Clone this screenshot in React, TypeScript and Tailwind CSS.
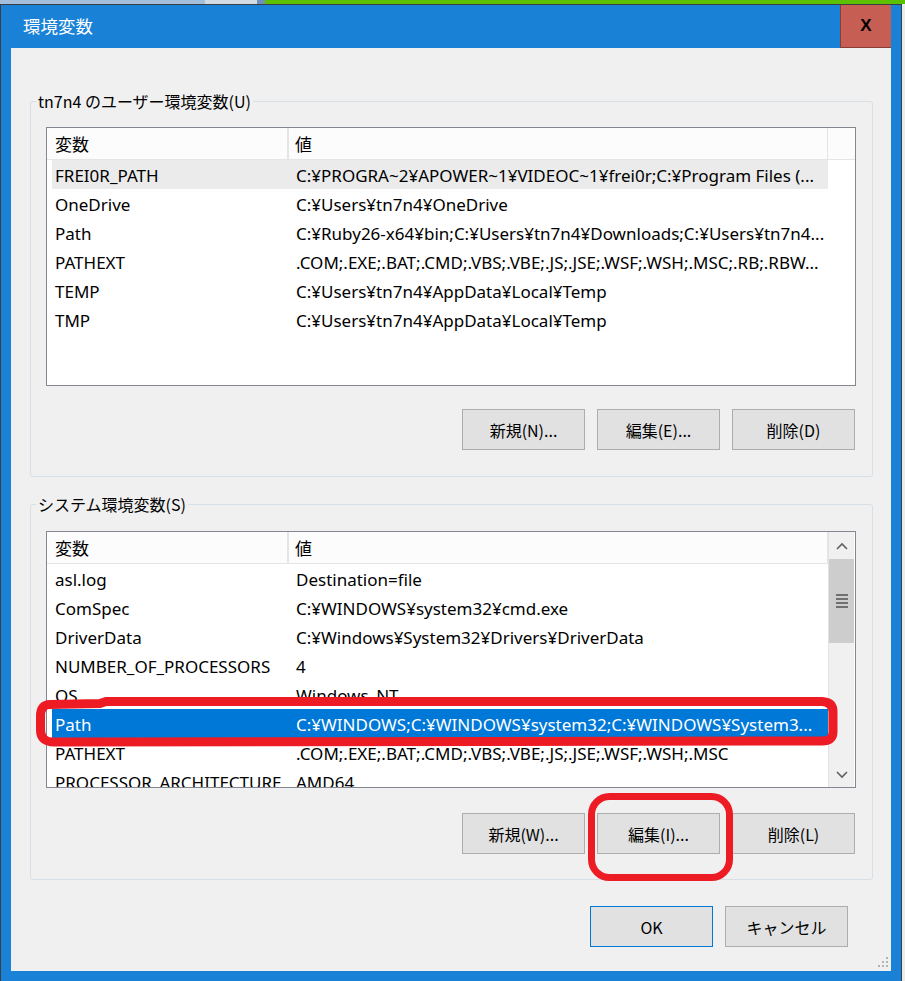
import React from "react";

type Row = [string, string];

const userVars: Row[] = [
  ["FREI0R_PATH", "C:¥PROGRA~2¥APOWER~1¥VIDEOC~1¥frei0r;C:¥Program Files (..."],
  ["OneDrive", "C:¥Users¥tn7n4¥OneDrive"],
  ["Path", "C:¥Ruby26-x64¥bin;C:¥Users¥tn7n4¥Downloads;C:¥Users¥tn7n4..."],
  ["PATHEXT", ".COM;.EXE;.BAT;.CMD;.VBS;.VBE;.JS;.JSE;.WSF;.WSH;.MSC;.RB;.RBW..."],
  ["TEMP", "C:¥Users¥tn7n4¥AppData¥Local¥Temp"],
  ["TMP", "C:¥Users¥tn7n4¥AppData¥Local¥Temp"],
];

const sysVars: Row[] = [
  ["asl.log", "Destination=file"],
  ["ComSpec", "C:¥WINDOWS¥system32¥cmd.exe"],
  ["DriverData", "C:¥Windows¥System32¥Drivers¥DriverData"],
  ["NUMBER_OF_PROCESSORS", "4"],
  ["OS", "Windows_NT"],
  ["Path", "C:¥WINDOWS;C:¥WINDOWS¥system32;C:¥WINDOWS¥System3..."],
  ["PATHEXT", ".COM;.EXE;.BAT;.CMD;.VBS;.VBE;.JS;.JSE;.WSF;.WSH;.MSC"],
  ["PROCESSOR_ARCHITECTURE", "AMD64"],
];

function ListRow({ row, state }: { row: Row; state: "none" | "hover" | "selected" }) {
  const cls =
    state === "selected"
      ? "flex h-[29px] w-[776px] shrink-0 bg-[#0078d7] text-white"
      : state === "hover"
      ? "flex h-[29px] w-[776px] shrink-0 bg-[#ebebeb] text-black"
      : "flex h-[29px] w-[776px] shrink-0 text-black";
  return (
    <div className={cls}>
      <div className="w-[244px] shrink-0 pl-[3px] pt-[2px] leading-[27px] whitespace-nowrap overflow-hidden">
        {row[0]}
      </div>
      <div className="flex-1 min-w-0 pt-[2px] leading-[27px] whitespace-nowrap overflow-hidden">{row[1]}</div>
    </div>
  );
}

function Chevron({ up }: { up: boolean }) {
  return (
    <svg width="12" height="8" viewBox="0 0 12 8">
      <polyline
        points={up ? "1,7 6,2 11,7" : "1,1 6,6 11,1"}
        fill="none"
        stroke="#606060"
        strokeWidth="1.6"
      />
    </svg>
  );
}

function Scrollbar() {
  return (
    <div className="w-[26px] shrink-0 flex flex-col bg-[#f0f0f0] border-l border-[#e3e3e3]">
      <div className="h-[27px] shrink-0 flex items-center justify-center bg-[#f0f0f0]">
        <Chevron up={true} />
      </div>
      <div className="h-[84px] shrink-0 bg-[#cdcdcd] flex flex-col items-center justify-center gap-[2px]">
        <div className="w-[12px] h-[2px] bg-[#707070]" />
        <div className="w-[12px] h-[2px] bg-[#707070]" />
        <div className="w-[12px] h-[2px] bg-[#707070]" />
        <div className="w-[12px] h-[2px] bg-[#707070]" />
      </div>
      <div className="flex-1" />
      <div className="h-[25px] shrink-0 flex items-center justify-center">
        <Chevron up={false} />
      </div>
    </div>
  );
}

function ListView({
  rows,
  tall,
  hover,
  selected,
  scroll,
}: {
  rows: Row[];
  tall: boolean;
  hover: number;
  selected: number;
  scroll: boolean;
}) {
  return (
    <div
      className={
        tall
          ? "flex h-[259px] w-[810px] border border-[#828790] bg-white overflow-hidden text-[17px]"
          : "flex h-[257px] w-[810px] border border-[#828790] bg-white overflow-hidden text-[17px]"
      }
    >
      <div className="flex flex-col w-[781px] shrink-0">
        <div className="flex h-[32px] shrink-0 border-b border-[#e5e5e5] bg-[#fcfcfc]">
          <div className="w-[242px] shrink-0 pl-[8px] pt-[3px] flex items-center border-r-2 border-[#e5e5e5]">
            変数
          </div>
          <div className="flex-1 pl-[6px] pt-[3px] flex items-center border-r border-[#e5e5e5]">値</div>
        </div>
        <div className="flex flex-col pl-[5px]">
          {rows.map((r, i) => (
            <ListRow key={i} row={r} state={i === selected ? "selected" : i === hover ? "hover" : "none"} />
          ))}
        </div>
      </div>
      {scroll ? (
        <Scrollbar />
      ) : (
        <div className="flex-1 h-[32px] border-b border-[#e5e5e5] bg-[#fcfcfc]" />
      )}
    </div>
  );
}

function Btn({ label, primary }: { label: string; primary?: boolean }) {
  return (
    <div
      className={
        primary
          ? "w-[123px] h-[41px] shrink-0 border border-[#0078d7] bg-[#e1e1e1] flex items-center justify-center text-[16px] font-['Noto_Sans_CJK_JP',sans-serif]"
          : "w-[123px] h-[41px] shrink-0 border border-[#adadad] bg-[#e1e1e1] flex items-center justify-center text-[16px] font-['Noto_Sans_CJK_JP',sans-serif]"
      }
    >
      {label}
    </div>
  );
}

function Group({
  legend,
  first,
  children,
}: {
  legend: string;
  first: boolean;
  children: React.ReactNode;
}) {
  return (
    <fieldset
      className={
        first
          ? "border border-[#d5dfe5] rounded-[3px] p-0 m-0 min-w-0"
          : "border border-[#d5dfe5] rounded-[3px] p-0 m-0 mt-[17px] min-w-0"
      }
    >
      <legend className="ml-[5px] px-[2px] text-[16px] leading-[20px] font-['Noto_Sans_CJK_JP',sans-serif]">
        {legend}
      </legend>
      {children}
    </fieldset>
  );
}

export default function App() {
  return (
    <div className="relative w-[905px] h-[981px] overflow-hidden bg-[#f0f0f0] flex flex-col font-['Noto_Sans','Noto_Sans_CJK_JP',sans-serif] text-black">
      <div className="flex h-[4px] shrink-0">
        <div className="w-[205px] bg-[#a3bfdc]" />
        <div className="w-[52px] bg-[#d3dbe4]" />
        <div className="w-[8px] bg-[#6f93b8]" />
        <div className="flex-1 bg-[#5cbf00]" />
      </div>
      <div className="flex flex-1 min-h-0">
        <div className="w-[902px] shrink-0 flex flex-col border-l border-t border-r border-[#3a3f45] bg-[#1a82d6] px-[10px] pb-[10px]">
          <div className="h-[43px] shrink-0 flex items-center">
            <div className="ml-[12px] text-white text-[17.5px] font-['Noto_Sans_CJK_JP',sans-serif]">環境変数</div>
            <div className="ml-auto w-[51px] h-full bg-[#c65e53] border-l border-b border-[#8a3d36] flex items-center justify-center text-black text-[17px] font-bold font-['Liberation_Sans',sans-serif]">
              X
            </div>
          </div>
          <div className="flex-1 flex flex-col bg-[#f0f0f0] pt-[43px] pl-[19px] pr-[18px]">
            <Group legend="tn7n4 のユーザー環境変数(U)" first={true}>
              <div className="pl-[15px] pr-[16px] pt-[16px] pb-[26px] flex flex-col">
                <ListView rows={userVars} tall={true} hover={0} selected={-1} scroll={false} />
                <div className="flex justify-end gap-[12px] mt-[23px] mr-[1px]">
                  <Btn label="新規(N)..." />
                  <Btn label="編集(E)..." />
                  <Btn label="削除(D)" />
                </div>
              </div>
            </Group>
            <Group legend="システム環境変数(S)" first={false}>
              <div className="pl-[15px] pr-[16px] pt-[17px] pb-[25px] flex flex-col">
                <ListView rows={sysVars} tall={false} hover={-1} selected={5} scroll={true} />
                <div className="flex justify-end gap-[12px] mt-[25px] mr-[1px]">
                  <Btn label="新規(W)..." />
                  <Btn label="編集(I)..." />
                  <Btn label="削除(L)" />
                </div>
              </div>
            </Group>
            <div className="flex justify-end gap-[12px] mt-[26px] pr-[25px]">
              <Btn label="OK" primary={true} />
              <Btn label="キャンセル" />
            </div>
            <div className="flex-1 flex justify-end items-end pb-[2px] -mr-[16px]">
              <svg width="12" height="12" viewBox="0 0 12 12">
                <rect x="9" y="0" width="2" height="2" fill="#b4b4b4" />
                <rect x="5" y="4" width="2" height="2" fill="#b4b4b4" />
                <rect x="9" y="4" width="2" height="2" fill="#b4b4b4" />
                <rect x="1" y="8" width="2" height="2" fill="#b4b4b4" />
                <rect x="5" y="8" width="2" height="2" fill="#b4b4b4" />
                <rect x="9" y="8" width="2" height="2" fill="#b4b4b4" />
              </svg>
            </div>
          </div>
        </div>
        <div className="flex-1 bg-[#ececec]" />
      </div>
      <svg
        className="absolute inset-0 pointer-events-none"
        width="905"
        height="981"
        viewBox="0 0 905 981"
      >
        <path
          d="M 50 704.5 L 100 703.5 L 106 701.5 L 822 701.5 Q 833 702 833 712 L 833 732 Q 833 741 822 741 L 54 742 Q 40.5 742 40.5 730 L 40.5 716 Q 40.5 704.5 50 704.5 Z"
          fill="none"
          stroke="#ed1c24"
          strokeWidth="9"
          strokeLinejoin="round"
        />
        <rect
          x="591.5"
          y="796.5"
          width="138"
          height="81"
          rx="18"
          fill="none"
          stroke="#ed1c24"
          strokeWidth="7"
        />
      </svg>
    </div>
  );
}
